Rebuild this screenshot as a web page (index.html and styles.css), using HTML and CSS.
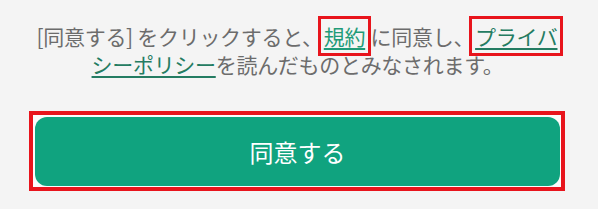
FILE: index.html
```html
<!DOCTYPE html>
<html lang="ja">
<head>
    <meta charset="UTF-8">
    <meta name="viewport" content="width=device-width, initial-scale=1.0">
    <title>同意する</title>
    <link rel="stylesheet" href="styles.css">
</head>
<body>
    <div class="consent">
        <p class="terms">[同意する] をクリックすると、<a class="link link-terms mark" href="#">規約</a> に同意し、<a class="link" href="#"><span class="mark">プライバ</span>シーポリシー</a>を読んだものとみなされます。</p>

        <div class="button-frame">
            <button class="agree-button">同意する</button>
        </div>
    </div>
</body>
</html>
```

FILE: styles.css
```css
body {
    margin: 0;
    background: #f4f4f4;
    font-family: 'Noto Sans CJK JP', 'Noto Sans', sans-serif;
}

.consent {
    padding: 22px 33px 0 29px;
}

.terms {
    margin: 0 0 33px;
    padding: 0 4px 0 5px;
    font-size: 21px;
    line-height: 28px;
    letter-spacing: -0.3px;
    color: #6c6c6c;
    text-align: center;
}

.link {
    color: #247c62;
    text-decoration: underline;
    text-decoration-thickness: 2px;
    text-underline-offset: 3px;
}

.link-terms {
    color: #1f9b78;
}

/* review markers */
.mark {
    outline: 3px solid #e8141c;
    outline-offset: 2px;
    padding: 0 1px;
}

.button-frame {
    border: 4px solid #e8141c;
    padding: 2px 1px 1px 2px;
    background: #fbfbfb;
}

.agree-button {
    display: block;
    width: 100%;
    height: 69px;
    border: none;
    border-radius: 12px;
    background: #10a37f;
    color: #fff;
    font-family: inherit;
    font-size: 24px;
    cursor: pointer;
}
```
